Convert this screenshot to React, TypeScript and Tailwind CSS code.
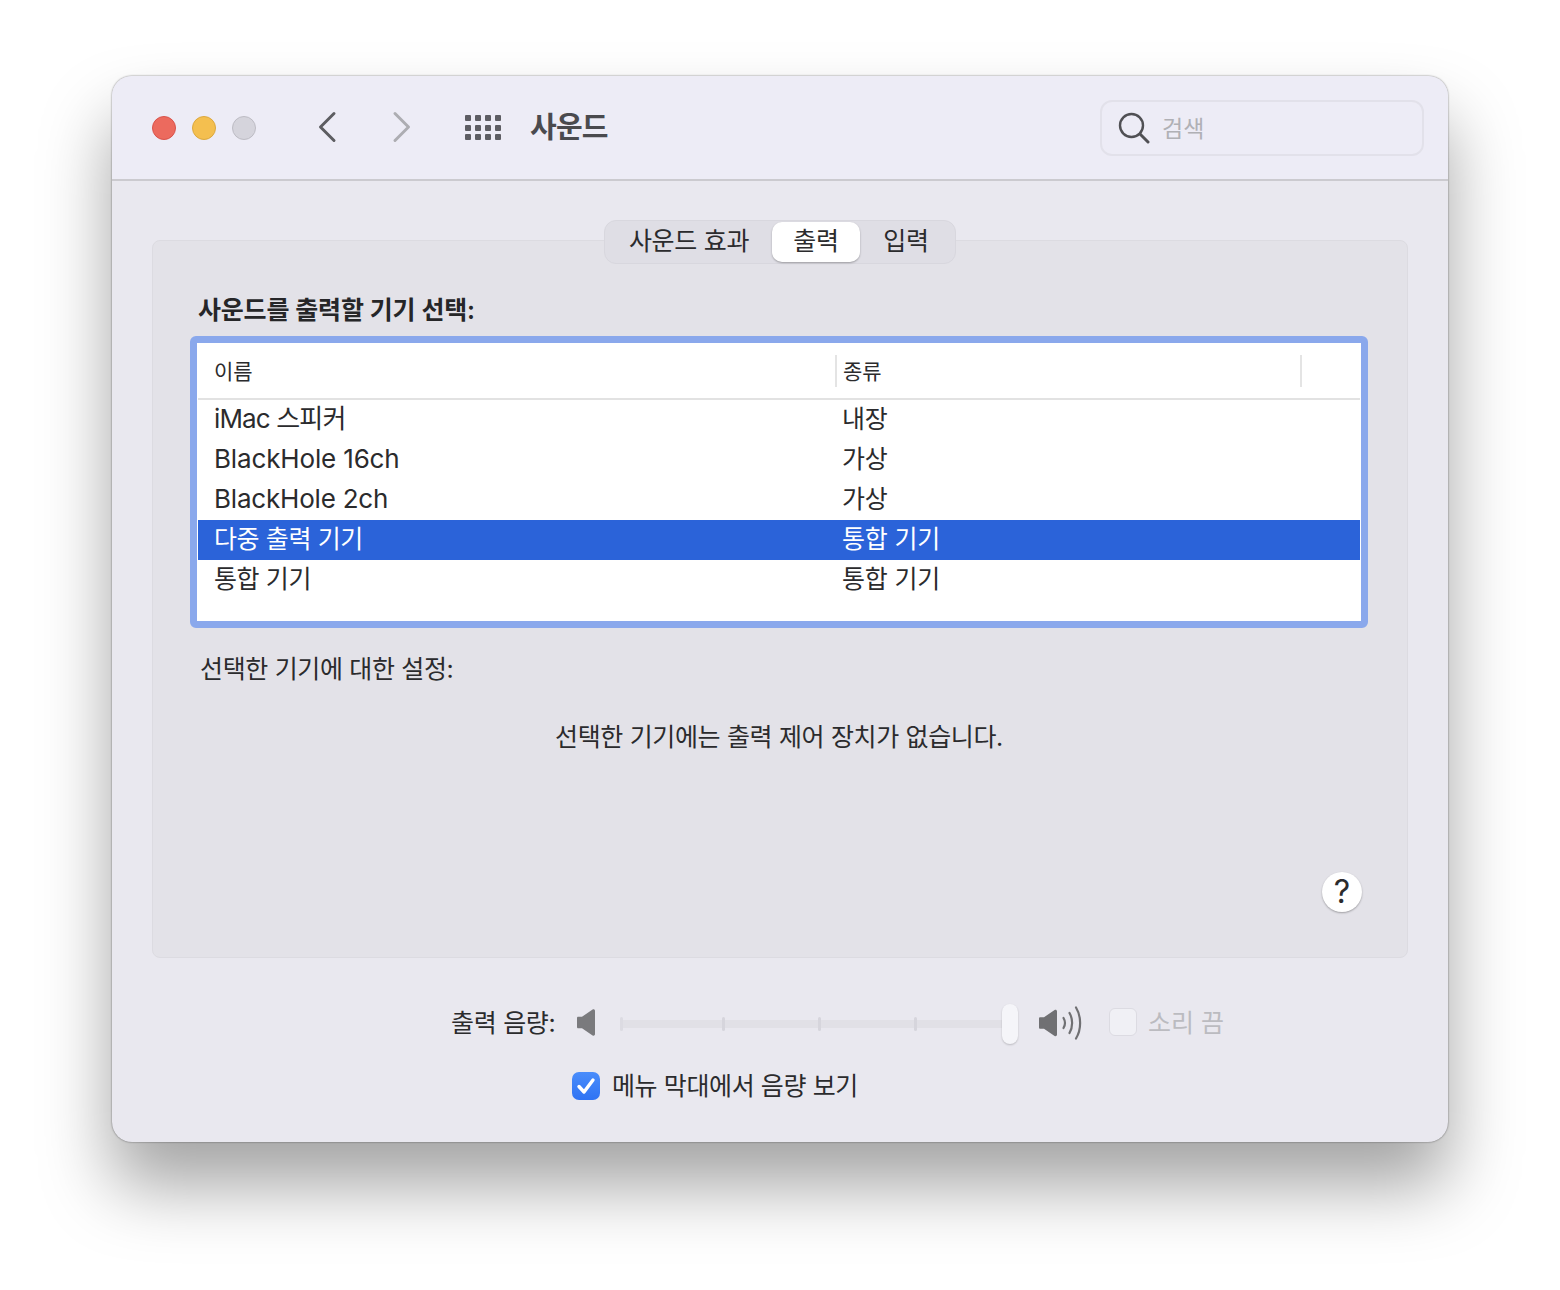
import React from 'react';

const font = { fontFamily: 'Inter, "Noto Sans CJK KR", sans-serif' };

const rows = [
  { name: 'iMac 스피커', nameClass: 'pb-[3px] text-[26px] tracking-[-0.85px]', type: '내장' },
  { name: 'BlackHole 16ch', nameClass: 'pb-[3px] text-[26px] tracking-[-0.15px]', type: '가상' },
  { name: 'BlackHole 2ch', nameClass: 'pb-[3px] text-[26px] tracking-[-0.2px]', type: '가상' },
  { name: '다중 출력 기기', nameClass: 'pb-[1px] text-[25px] tracking-[-0.4px]', type: '통합 기기', selected: true },
  { name: '통합 기기', nameClass: 'pb-[1px] text-[25px] tracking-[-0.4px]', type: '통합 기기' },
];

const SpeakerBody = ({ fill }: { fill: string }) => (
  <path d="M1 9.500c0-.8.5-1.300 1.300-1.300H6L16.600 1c1-.7 2.400 0 2.400 1.200v23.600c0 1.200-1.400 1.900-2.400 1.200L6 19.800H2.300C1.500 19.800 1 19.300 1 18.500z" fill={fill} />
);

const App: React.FC = () => {
  return (
    <div className="h-[1290px] overflow-hidden bg-white pt-[76px]" style={font}>
      <div className="mx-auto flex h-[1066px] w-[1336px] flex-col rounded-[20px] bg-[#e9e8ef] shadow-[0_44px_70px_rgba(0,0,0,0.36),0_0_2px_rgba(0,0,0,0.55)]">
        {/* Toolbar */}
        <div className="flex h-[105px] shrink-0 items-center rounded-t-[20px] border-b-2 border-[#cbcacf] bg-[#edecf6] pl-10 pr-6">
          <div className="flex gap-4">
            <div className="h-6 w-6 rounded-full border border-[#d9534b] bg-[#ec6a5e]"></div>
            <div className="h-6 w-6 rounded-full border border-[#dca83e] bg-[#f4bf4f]"></div>
            <div className="h-6 w-6 rounded-full border border-[#bdbcc4] bg-[#d5d4dc]"></div>
          </div>
          <svg className="ml-[61px] -mt-[2px]" width="20" height="32" viewBox="0 0 20 32" fill="none">
            <path d="M17 2.500 3.500 16 17 29.500" stroke="#5d5d61" strokeWidth="3" strokeLinecap="round" strokeLinejoin="round" />
          </svg>
          <svg className="ml-[55px] -mt-[2px]" width="20" height="32" viewBox="0 0 20 32" fill="none">
            <path d="M3 2.500 16.500 16 3 29.500" stroke="#adadb2" strokeWidth="3" strokeLinecap="round" strokeLinejoin="round" />
          </svg>
          <div className="ml-[53px] grid w-[36px] grid-cols-4 gap-x-[4px] gap-y-[3.5px]">
            {Array.from({ length: 12 }).map((_, i) => (
              <div key={i} className="h-[6px] w-[6px] rounded-[1px] bg-[#5d5d63]"></div>
            ))}
          </div>
          <div className="ml-[29px] pb-[1px] text-[29px] font-semibold leading-none tracking-[-0.8px] text-[#4a4a4e]">사운드</div>
          <div className="ml-auto flex h-[56px] w-[324px] items-center rounded-[12px] border-2 border-[#e2e1ea] pl-[16px]">
            <svg width="32" height="32" viewBox="0 0 32 32" fill="none">
              <circle cx="13.500" cy="13.500" r="11.500" stroke="#505054" strokeWidth="2.400" />
              <path d="M22 22l8 8" stroke="#505054" strokeWidth="3" strokeLinecap="round" />
            </svg>
            <span className="ml-[12px] pt-[4px] text-[23px] text-[#b0b0b5]">검색</span>
          </div>
        </div>

        {/* Content */}
        <div className="flex flex-1 flex-col px-10 pt-[39px]">
          <div className="relative z-10 flex justify-center">
            <div className="flex h-[44px] w-[352px] items-center rounded-[12px] border border-[#d8d7de] bg-[#dfdee5] px-[1px] text-[25px] tracking-[-0.3px] text-[#2b2b2d]">
              <div className="w-[166px] pb-[1px] text-center">사운드 효과</div>
              <div className="flex h-[40px] w-[88px] items-center justify-center rounded-[10px] bg-white pb-[1px] shadow-[0_1px_2px_rgba(0,0,0,0.3)]">출력</div>
              <div className="flex-1 pb-[1px] pr-[2px] text-center">입력</div>
            </div>
          </div>

          <div className="-mt-[24px] flex h-[718px] flex-col rounded-[8px] border border-[#dcdbe1] bg-[#e3e2e8] pl-[37px] pr-[39px] pt-[50px]">
            <div className="pl-[8px] pt-[1px] text-[25px] font-semibold leading-[37px] tracking-[-0.2px] text-[#262628]">사운드를 출력할 기기 선택:</div>
            <div className="mt-[7px] h-[292px] rounded-[6px] border-[7px] border-[#8aa8ec] bg-white">
              <div className="mx-[1px] flex h-[57px] items-center border-b-2 border-[#e2e2e2] text-[21px] text-[#2b2b2d]">
                <div className="w-[637px] pl-[16px] pt-[2px]">이름</div>
                <div className="h-[32px] w-[2px] bg-[#e4e4e4]"></div>
                <div className="w-[463px] pl-[6px] pt-[2px]">종류</div>
                <div className="h-[32px] w-[2px] bg-[#e4e4e4]"></div>
              </div>
              {rows.map(row => (
                <div
                  key={row.name}
                  className={`mx-[1px] flex h-10 items-center ${row.selected ? 'bg-[#2b63d9] text-white' : 'text-[#2b2b2d]'}`}
                >
                  <div className={`w-[644px] pl-[16px] ${row.nameClass}`}>{row.name}</div>
                  <div className="pb-[1px] text-[25px] tracking-[-0.2px]">{row.type}</div>
                </div>
              ))}
            </div>
            <div className="mt-[21px] pl-[10px] text-[25px] leading-[40px] tracking-[-0.35px] text-[#2b2b2d]">선택한 기기에 대한 설정:</div>
            <div className="mt-[28px] text-center text-[25px] leading-[40px] tracking-[-0.35px] text-[#2b2b2d]">선택한 기기에는 출력 제어 장치가 없습니다.</div>
            <div className="mt-[115px] flex justify-end pr-[6px]">
              <div className="flex h-10 w-10 items-center justify-center rounded-full bg-white text-[32px] font-normal text-[#2b2b2d] shadow-[0_1px_2px_rgba(0,0,0,0.3)]">?</div>
            </div>
          </div>

          {/* Volume */}
          <div className="mt-[46px] flex h-[40px] items-center pl-[299px]">
            <span className="w-[105px] whitespace-nowrap pb-[1px] text-[25px] tracking-[-0.3px] text-[#2b2b2d]">출력 음량:</span>
            <svg className="ml-[20px] -mt-[2px]" width="20" height="30" viewBox="0 0 20 29">
              <SpeakerBody fill="#7a7a7d" />
            </svg>
            <div className="relative ml-[24px] flex h-[8px] w-[398px] items-center bg-[#e1e0e6]">
              <div className="h-[14px] w-[3px] rounded-full bg-[#dcdbe2]"></div>
              <div className="ml-[99px] h-[14px] w-[3px] rounded-full bg-[#d6d5dc]"></div>
              <div className="ml-[93px] h-[14px] w-[3px] rounded-full bg-[#d6d5dc]"></div>
              <div className="ml-[93px] h-[14px] w-[3px] rounded-full bg-[#d6d5dc]"></div>
              <div className="absolute right-0 top-1/2 h-[40px] w-[16px] -translate-y-1/2 rounded-full bg-[#f5f5f9] shadow-[0_1px_2px_rgba(0,0,0,0.2)]"></div>
            </div>
            <svg className="ml-[20px] -mt-[2px]" width="46" height="36" viewBox="0 0 46 36" fill="none">
              <g transform="translate(0 4)">
                <SpeakerBody fill="#707073" />
              </g>
              <path d="M25.500 13c1.800 3 1.800 7 0 10" stroke="#707073" strokeWidth="2.200" strokeLinecap="round" />
              <path d="M31.500 8c3.500 6 3.500 14 0 20" stroke="#707073" strokeWidth="2.200" strokeLinecap="round" />
              <path d="M38 2.500c5.500 9 5.500 22 0 31" stroke="#707073" strokeWidth="2.200" strokeLinecap="round" />
            </svg>
            <div className="ml-[25px] -mt-[4px] h-[28px] w-[28px] rounded-[6px] border border-[#dcdbe2] bg-[#f0f0f5]"></div>
            <span className="ml-[11px] whitespace-nowrap pb-[1px] text-[25px] text-[#bbbbc0]">소리 끔</span>
          </div>

          <div className="mt-[22px] flex h-[40px] items-center pl-[420px]">
            <div className="flex h-[28px] w-[28px] items-center justify-center rounded-[7px] bg-gradient-to-b from-[#4a8dfb] to-[#2f73f3]">
              <svg width="20" height="18" viewBox="0 0 20 18" fill="none">
                <path d="M3 9.500 8 15 17 3" stroke="white" strokeWidth="3.400" strokeLinecap="round" strokeLinejoin="round" />
              </svg>
            </div>
            <span className="ml-[12px] whitespace-nowrap pt-[1px] text-[25px] tracking-[-0.4px] text-[#2b2b2d]">메뉴 막대에서 음량 보기</span>
          </div>
        </div>
      </div>
    </div>
  );
};

export default App;
